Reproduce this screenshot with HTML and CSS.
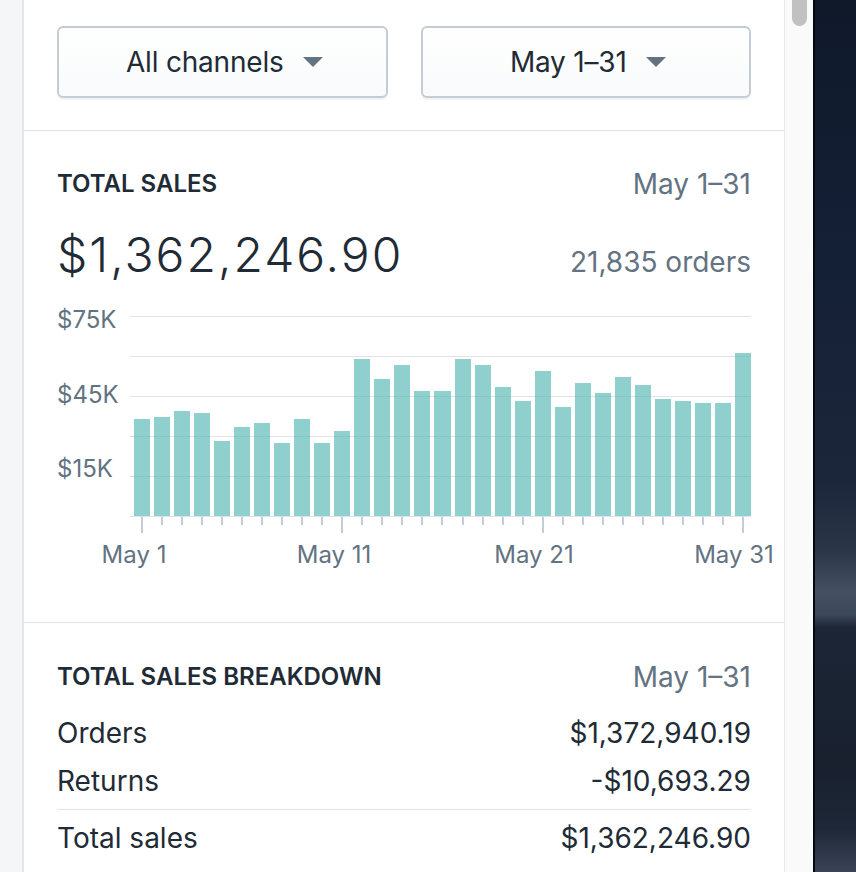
FILE: index.html
```html
<!DOCTYPE html>
<html lang="en">
<head>
<meta charset="utf-8">
<title>Total sales</title>
<link rel="stylesheet" href="styles.css">
</head>
<body>
<div class="screen">
  <div class="gutter"></div>
  <main class="card">
    <section class="filters">
      <button class="select" type="button"><span>All channels</span><span class="caret"></span></button>
      <button class="select" type="button"><span>May 1–31</span><span class="caret"></span></button>
    </section>

    <section class="panel">
      <div class="panel-head">
        <h2 class="subheading">Total sales</h2>
        <span class="muted">May 1–31</span>
      </div>
      <div class="summary">
        <span class="big">$1,362,246.90</span>
        <span class="muted">21,835 orders</span>
      </div>
      <div class="chart">
        <div class="y-axis"><span>$75K</span><span>$45K</span><span>$15K</span></div>
        <div class="plot-col">
          <div class="plot">
            <div class="bar" style="height:97px"></div>
            <div class="bar" style="height:99px"></div>
            <div class="bar" style="height:105px"></div>
            <div class="bar" style="height:103px"></div>
            <div class="bar" style="height:75px"></div>
            <div class="bar" style="height:89px"></div>
            <div class="bar" style="height:93px"></div>
            <div class="bar" style="height:73px"></div>
            <div class="bar" style="height:97px"></div>
            <div class="bar" style="height:73px"></div>
            <div class="bar" style="height:85px"></div>
            <div class="bar" style="height:157px"></div>
            <div class="bar" style="height:137px"></div>
            <div class="bar" style="height:151px"></div>
            <div class="bar" style="height:125px"></div>
            <div class="bar" style="height:125px"></div>
            <div class="bar" style="height:157px"></div>
            <div class="bar" style="height:151px"></div>
            <div class="bar" style="height:129px"></div>
            <div class="bar" style="height:115px"></div>
            <div class="bar" style="height:145px"></div>
            <div class="bar" style="height:109px"></div>
            <div class="bar" style="height:133px"></div>
            <div class="bar" style="height:123px"></div>
            <div class="bar" style="height:139px"></div>
            <div class="bar" style="height:131px"></div>
            <div class="bar" style="height:117px"></div>
            <div class="bar" style="height:115px"></div>
            <div class="bar" style="height:113px"></div>
            <div class="bar" style="height:113px"></div>
            <div class="bar" style="height:163px"></div>
          </div>
          <div class="ticks">
            <i class="tick major"></i><i class="tick"></i><i class="tick"></i><i class="tick"></i><i class="tick"></i>
            <i class="tick"></i><i class="tick"></i><i class="tick"></i><i class="tick"></i><i class="tick"></i>
            <i class="tick major"></i><i class="tick"></i><i class="tick"></i><i class="tick"></i><i class="tick"></i>
            <i class="tick"></i><i class="tick"></i><i class="tick"></i><i class="tick"></i><i class="tick"></i>
            <i class="tick major"></i><i class="tick"></i><i class="tick"></i><i class="tick"></i><i class="tick"></i>
            <i class="tick"></i><i class="tick"></i><i class="tick"></i><i class="tick"></i><i class="tick"></i>
            <i class="tick major"></i>
          </div>
        </div>
      </div>
      <div class="x-axis"><span>May 1</span><span>May 11</span><span>May 21</span><span>May 31</span></div>
    </section>

    <section class="panel breakdown">
      <div class="panel-head">
        <h2 class="subheading">Total sales breakdown</h2>
        <span class="muted">May 1–31</span>
      </div>
      <div class="rows">
        <div class="row"><span>Orders</span><span>$1,372,940.19</span></div>
        <div class="row"><span>Returns</span><span>-$10,693.29</span></div>
        <div class="row total"><span>Total sales</span><span>$1,362,246.90</span></div>
      </div>
    </section>
  </main>
  <div class="scrollbar"><div class="thumb"></div></div>
  <div class="desktop"></div>
</div>
</body>
</html>
```

FILE: styles.css
```css
* { box-sizing: border-box; }

html, body {
  margin: 0;
  padding: 0;
  height: 100%;
  overflow: hidden;
}

body {
  font-family: Inter, "Liberation Sans", sans-serif;
  color: #212b36;
  background: #fff;
}

.screen {
  display: flex;
  width: 856px;
  height: 872px;
  overflow: hidden;
}

.gutter {
  flex: none;
  width: 22px;
  background: #f4f6f8;
}

.card {
  flex: none;
  width: 763px;
  background: #fff;
  border-left: 2px solid #e4e7ea;
  border-right: 1px solid #e8e8e8;
}

.scrollbar {
  flex: none;
  width: 28px;
  background: #fafafa;
  padding-left: 7px;
}

.thumb {
  width: 15px;
  height: 36px;
  margin-top: -10px;
  background: #c1c1c1;
  border-radius: 8px;
}

.desktop {
  flex: 1;
  border-left: 2px solid #05080e;
  background: linear-gradient(180deg,
    #0f192a 0%,
    #142036 30%,
    #1b263a 55%,
    #2a3548 63%,
    #455063 68%,
    #3c4759 70.5%,
    #1c2536 72%,
    #19212f 88%,
    #1e2737 95%,
    #3a4456 100%);
}

/* Filters */
.filters {
  display: grid;
  grid-template-columns: 1fr 1fr;
  column-gap: 33px;
  padding: 26px 33px 32px;
  border-bottom: 1px solid #dfe3e8;
}

.select {
  display: flex;
  align-items: center;
  justify-content: center;
  gap: 19px;
  height: 72px;
  padding: 0 0 0 4px;
  border: 2px solid #c4cdd5;
  border-radius: 6px;
  background: linear-gradient(180deg, #ffffff, #f9fafb);
  box-shadow: 0 2px 0 rgba(22, 29, 37, 0.05);
  font-family: inherit;
  font-size: 28px;
  letter-spacing: -0.2px;
  color: #212b36;
}

.caret {
  width: 0;
  height: 0;
  border-left: 10px solid transparent;
  border-right: 10px solid transparent;
  border-top: 10px solid #637381;
}

/* Panels */
.panel {
  padding: 37px 33px 51px;
  border-bottom: 1px solid #dfe3e8;
}

.panel-head {
  display: flex;
  justify-content: space-between;
  align-items: flex-start;
  line-height: 32px;
}

.subheading {
  margin: 0;
  font-size: 24px;
  font-weight: 600;
  text-transform: uppercase;
  color: #212b36;
}

.muted {
  font-size: 28px;
  color: #637381;
}

.summary {
  display: flex;
  justify-content: space-between;
  align-items: baseline;
  margin-top: 27px;
  line-height: 56px;
}

.big {
  font-size: 48px;
  font-weight: 350;
  letter-spacing: 2px;
  color: #212b36;
}

/* Chart */
.chart {
  display: grid;
  grid-template-columns: 73px 1fr;
  align-items: start;
  margin-top: 26px;
}

.y-axis {
  display: flex;
  flex-direction: column;
  justify-content: space-between;
  height: 173px;
  margin-top: -8px;
  font-size: 24px;
  line-height: 24px;
  color: #637381;
}

.plot {
  display: flex;
  align-items: flex-end;
  gap: 4px;
  height: 201px;
  padding-left: 4px;
  border-bottom: 1px solid #dfe3e8;
  background: repeating-linear-gradient(180deg, #dfe3e8 0 1px, transparent 1px 40px);
}

.bar {
  flex: 1;
  background: rgba(80, 180, 176, 0.64);
}

.ticks {
  display: flex;
  gap: 4px;
  padding-left: 4px;
  height: 16px;
}

.tick {
  flex: 1;
  display: flex;
  justify-content: center;
}

.tick::before {
  content: "";
  width: 2px;
  height: 8px;
  background: #c4cdd5;
}

.tick.major::before {
  height: 16px;
}

.x-axis {
  display: flex;
  margin: 6px 0 0 -23px;
  font-size: 24px;
  line-height: 32px;
  color: #637381;
}

.x-axis span {
  flex: none;
  width: 200px;
  text-align: center;
}

/* Breakdown */
.breakdown {
  padding-top: 38px;
  border-bottom: none;
}

.rows {
  display: flex;
  flex-direction: column;
  gap: 8px;
  margin-top: 20px;
}

.row {
  display: flex;
  justify-content: space-between;
  font-size: 28px;
  line-height: 40px;
  color: #212b36;
}

.row.total {
  border-top: 1px solid #dfe3e8;
  padding-top: 8px;
}
```
